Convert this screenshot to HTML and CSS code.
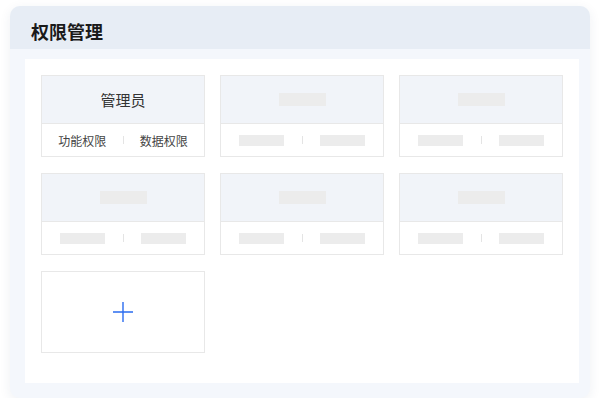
FILE: index.html
```html
<!DOCTYPE html>
<html lang="zh-CN">
<head>
    <meta charset="UTF-8">
    <title>权限管理</title>
    <link rel="stylesheet" href="styles.css">
</head>
<body>
    <div class="panel">
        <div class="panel-header">权限管理</div>
        <div class="panel-body">
            <div class="role-list">
                <div class="role-card">
                    <div class="role-name">管理员</div>
                    <div class="role-actions">
                        <span class="action">功能权限</span>
                        <span class="sep"></span>
                        <span class="action">数据权限</span>
                    </div>
                </div>
                <div class="role-card">
                    <div class="role-name"><span class="ph ph-title"></span></div>
                    <div class="role-actions">
                        <span class="action"><span class="ph"></span></span>
                        <span class="sep"></span>
                        <span class="action"><span class="ph"></span></span>
                    </div>
                </div>
                <div class="role-card">
                    <div class="role-name"><span class="ph ph-title"></span></div>
                    <div class="role-actions">
                        <span class="action"><span class="ph"></span></span>
                        <span class="sep"></span>
                        <span class="action"><span class="ph"></span></span>
                    </div>
                </div>
                <div class="role-card">
                    <div class="role-name"><span class="ph ph-title"></span></div>
                    <div class="role-actions">
                        <span class="action"><span class="ph"></span></span>
                        <span class="sep"></span>
                        <span class="action"><span class="ph"></span></span>
                    </div>
                </div>
                <div class="role-card">
                    <div class="role-name"><span class="ph ph-title"></span></div>
                    <div class="role-actions">
                        <span class="action"><span class="ph"></span></span>
                        <span class="sep"></span>
                        <span class="action"><span class="ph"></span></span>
                    </div>
                </div>
                <div class="role-card">
                    <div class="role-name"><span class="ph ph-title"></span></div>
                    <div class="role-actions">
                        <span class="action"><span class="ph"></span></span>
                        <span class="sep"></span>
                        <span class="action"><span class="ph"></span></span>
                    </div>
                </div>
                <div class="role-card add-card">
                    <svg width="20" height="20" viewBox="0 0 20 20">
                        <path d="M10 0V20M0 10H20" stroke="#2a6cf0" stroke-width="1.4" fill="none"/>
                    </svg>
                </div>
            </div>
        </div>
    </div>
</body>
</html>
```

FILE: styles.css
```css
body {
    margin: 0;
    padding: 6px 10px 0;
    background-color: #fff;
    font-family: "Noto Sans CJK SC", "Noto Sans", sans-serif;
}

.panel {
    width: 580px;
    height: 392px;
    border-radius: 10px;
    background-color: #f4f7fc;
    box-shadow: 0 3px 12px rgba(40, 60, 100, 0.08);
    overflow: hidden;
    display: flex;
    flex-direction: column;
}

.panel-header {
    height: 43px;
    padding: 7px 0 0 21px;
    box-sizing: border-box;
    background-color: #e7edf5;
    display: flex;
    align-items: center;
    font-size: 18px;
    font-weight: bold;
    color: #1a1a1a;
}

.panel-body {
    flex: 1;
    padding: 10px 11px 15px 15px;
    display: flex;
}

.role-list {
    flex: 1;
    background-color: #fff;
    padding: 16px;
    display: grid;
    grid-template-columns: repeat(3, 164px);
    grid-auto-rows: 82px;
    column-gap: 15px;
    row-gap: 16px;
    align-content: start;
}

.role-card {
    border: 1px solid #e8e8e8;
    display: flex;
    flex-direction: column;
    box-sizing: border-box;
}

.role-name {
    height: 47px;
    background-color: #f1f4f9;
    border-bottom: 1px solid #e8e8e8;
    display: flex;
    align-items: center;
    justify-content: center;
    font-size: 15px;
    color: #333;
}

.role-actions {
    flex: 1;
    display: flex;
    align-items: center;
}

.action {
    flex: 1;
    display: flex;
    justify-content: center;
    font-size: 12px;
    color: #444;
}

.sep {
    width: 1px;
    height: 8px;
    background-color: #e4e4e4;
}

.ph {
    display: block;
    width: 45px;
    height: 11px;
    background-color: #ececec;
}

.ph-title {
    width: 47px;
    height: 13px;
}

.add-card {
    align-items: center;
    justify-content: center;
}
```
